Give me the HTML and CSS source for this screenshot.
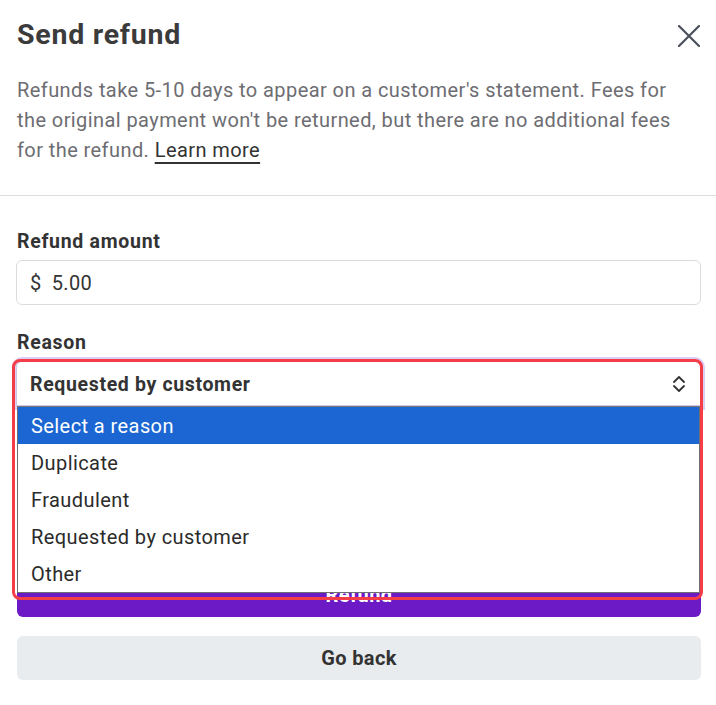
FILE: index.html
```html
<!DOCTYPE html>
<html lang="en">
<head>
<meta charset="utf-8">
<title>Send refund</title>
<link rel="stylesheet" href="styles.css">
</head>
<body>
<div class="modal">
  <header class="head">
    <div class="title-row">
      <h1 class="title">Send refund</h1>
      <button class="close" aria-label="Close">
        <svg width="22" height="22" viewBox="0 0 22 22"><path d="M1 1 L21 21 M21 1 L1 21" stroke="#4b505c" stroke-width="2.2" fill="none" stroke-linecap="round"/></svg>
      </button>
    </div>
    <p class="desc">Refunds take 5-10 days to appear on a customer's statement. Fees for the original payment won't be returned, but there are no additional fees for the refund. <a class="link" href="#">Learn more</a></p>
  </header>
  <div class="divider"></div>
  <form class="form">
    <div class="field">
      <label class="label">Refund amount</label>
      <div class="input"><span class="cur">$</span><span class="val">5.00</span></div>
    </div>
    <div class="field field-reason">
      <label class="label">Reason</label>
      <div class="select-wrap">
        <div class="select">
          <span class="sel-text">Requested by customer</span>
          <svg class="chev" width="14" height="18" viewBox="0 0 14 18"><path d="M2 7 L7 2 L12 7 M2 11 L7 16 L12 11" stroke="#333" stroke-width="1.8" fill="none" stroke-linecap="round" stroke-linejoin="round"/></svg>
        </div>
        <ul class="popup">
          <li class="opt opt-active">Select a reason</li>
          <li class="opt">Duplicate</li>
          <li class="opt">Fraudulent</li>
          <li class="opt">Requested by customer</li>
          <li class="opt">Other</li>
        </ul>
        <div class="highlight"></div>
      </div>
    </div>
    <div class="actions">
      <button type="button" class="btn btn-primary">Refund</button>
      <button type="button" class="btn btn-secondary">Go back</button>
    </div>
  </form>
</div>
</body>
</html>
```
FILE: styles.css
```css
* { box-sizing: border-box; }
html, body { margin: 0; padding: 0; background: #fff; }
body { font-family: Roboto, "Noto Sans", Arial, sans-serif; color: #333; }

.head { padding: 18px 15px 30px 17px; }
.title-row { display: flex; justify-content: space-between; align-items: flex-start; }
.title { margin: 0; font-size: 28.5px; line-height: 34px; font-weight: 700; color: #3b3b3b; letter-spacing: 0.75px; }
.close { border: 0; background: none; padding: 0; margin-top: 7px; margin-right: 1px; width: 22px; height: 22px; display: flex; }
.desc { margin: 23px 0 0; font-size: 20px; line-height: 30px; color: #6d6d72; letter-spacing: 0.42px; }
.link { color: #333; text-decoration: underline; text-decoration-thickness: 2px; text-underline-offset: 5px; }

.divider { height: 1px; background: #dedede; }

.form { padding: 34px 15px 0 16px; }
.field { display: flex; flex-direction: column; gap: 6px; }
.field-reason { margin-top: 26px; }
.label { font-size: 19.5px; line-height: 24px; font-weight: 700; color: #333; padding-left: 1px; letter-spacing: 0.7px; }

.input { height: 45px; border: 1px solid #dcdcdc; border-radius: 6px; display: flex; align-items: center; padding-left: 13px; font-size: 20px; color: #333; letter-spacing: 0.4px; }
.cur { margin-right: 10px; }

.select-wrap { position: relative; }
.select { height: 45px; border: 1px solid #cfc6e6; border-radius: 6px 6px 0 0; display: flex; align-items: center; justify-content: space-between; padding: 2px 14px 0 13px; font-size: 19.5px; font-weight: 700; color: #333; box-shadow: 0 0 0 4px #dccff6; background: #fff; letter-spacing: 0.65px; }
.chev { margin-top: -2px; }

.popup { position: absolute; z-index: 2; top: 45px; left: 1px; right: 1px; margin: 0; padding: 0; list-style: none; background: #fff; border: 1px solid #6f6f6f; border-top-color: #777; }
.opt { height: 37px; display: flex; align-items: center; padding-left: 13px; font-size: 20px; color: #2b2b2b; letter-spacing: 0.42px; }
.opt-active { background: #1b66d2; color: #fff; }

.highlight { position: absolute; z-index: 3; top: -2px; left: -4px; width: 691px; height: 241px; border: 3px solid #f43d47; border-radius: 8px; pointer-events: none; }

.actions { display: flex; flex-direction: column; gap: 19px; margin-top: 167px; padding-left: 1px; }
.btn { height: 44px; border: 0; border-radius: 6px; font-family: inherit; font-size: 20px; font-weight: 700; letter-spacing: 0.4px; }
.btn-primary { background: #6b1ac6; color: #fff; }
.btn-secondary { background: #e9ecef; color: #333; }
```
